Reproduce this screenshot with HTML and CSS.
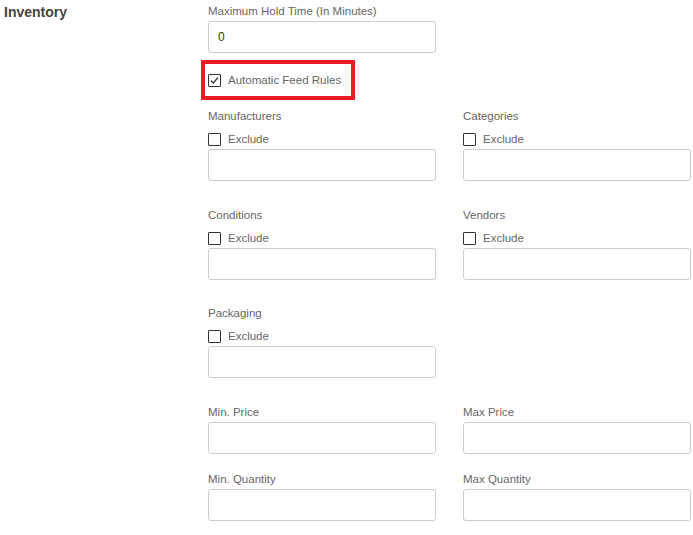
FILE: index.html
```html
<!DOCTYPE html>
<html>
<head>
  <title>Inventory</title>
  <meta charset="UTF-8">
  <meta name="viewport" content="width=device-width, initial-scale=1.0">
  <link rel="stylesheet" href="styles.css">
</head>
<body>
  <div class="section">
    <h2 class="section-title">Inventory</h2>

    <div class="form">
      <div class="field single">
        <label class="label">Maximum Hold Time (In Minutes)</label>
        <input class="input" type="text" value="0" />
      </div>

      <div class="highlight">
        <label class="check">
          <span class="box">
            <svg width="11" height="11" viewBox="0 0 11 11"><path d="M2 5.5 L4.3 8 L9 2.5" fill="none" stroke="#333" stroke-width="1.2"/></svg>
          </span>
          Automatic Feed Rules
        </label>
      </div>

      <div class="row">
        <div class="field">
          <label class="label">Manufacturers</label>
          <label class="check exclude"><span class="box"></span>Exclude</label>
          <input class="input" type="text" />
        </div>
        <div class="field">
          <label class="label">Categories</label>
          <label class="check exclude"><span class="box"></span>Exclude</label>
          <input class="input" type="text" />
        </div>
      </div>

      <div class="row close">
        <div class="field">
          <label class="label">Conditions</label>
          <label class="check exclude"><span class="box"></span>Exclude</label>
          <input class="input" type="text" />
        </div>
        <div class="field">
          <label class="label">Vendors</label>
          <label class="check exclude"><span class="box"></span>Exclude</label>
          <input class="input" type="text" />
        </div>
      </div>

      <div class="row">
        <div class="field">
          <label class="label">Packaging</label>
          <label class="check exclude"><span class="box"></span>Exclude</label>
          <input class="input" type="text" />
        </div>
      </div>

      <div class="row tight">
        <div class="field">
          <label class="label">Min. Price</label>
          <input class="input" type="text" />
        </div>
        <div class="field">
          <label class="label">Max Price</label>
          <input class="input" type="text" />
        </div>
      </div>

      <div class="row">
        <div class="field">
          <label class="label">Min. Quantity</label>
          <input class="input" type="text" />
        </div>
        <div class="field">
          <label class="label">Max Quantity</label>
          <input class="input" type="text" />
        </div>
      </div>
    </div>
  </div>
</body>
</html>
```

FILE: styles.css
```css
body { margin: 0; font-family: "Liberation Sans", Arial, sans-serif; color: #666; background: #fff; }
.section { display: flex; }
.section-title { width: 204px; margin: 0; padding: 3px 0 0 4px; font-size: 14px; font-weight: bold; color: #444; line-height: 18px; }
.form { width: 483px; padding-top: 3px; }
.row { display: grid; grid-template-columns: 228px 228px; column-gap: 27px; margin-bottom: 26px; }
.row.close { margin-bottom: 25px; }
.row.tight { margin-bottom: 17px; }
.field { display: flex; flex-direction: column; }
.field.single { width: 228px; }
.label { font-size: 11.5px; line-height: 16px; margin-bottom: 2px; color: #666; }
.input { box-sizing: border-box; height: 32px; width: 228px; margin: 0; padding: 0 9px; border: 1px solid #ccc; border-radius: 3px; font-family: inherit; font-size: 12px; color: #333; }
.check { display: flex; align-items: center; gap: 7px; font-size: 11.5px; color: #666; }
.check.exclude { height: 20px; margin-top: 3px; }
.box { box-sizing: border-box; width: 13px; height: 13px; border: 1px solid #333; border-radius: 1px; display: flex; align-items: center; justify-content: center; }
.highlight { width: 143px; height: 32px; margin: 7px 0 8px -7px; padding-left: 3px; border: 4px solid #ed1c24; display: flex; align-items: center; }
```
